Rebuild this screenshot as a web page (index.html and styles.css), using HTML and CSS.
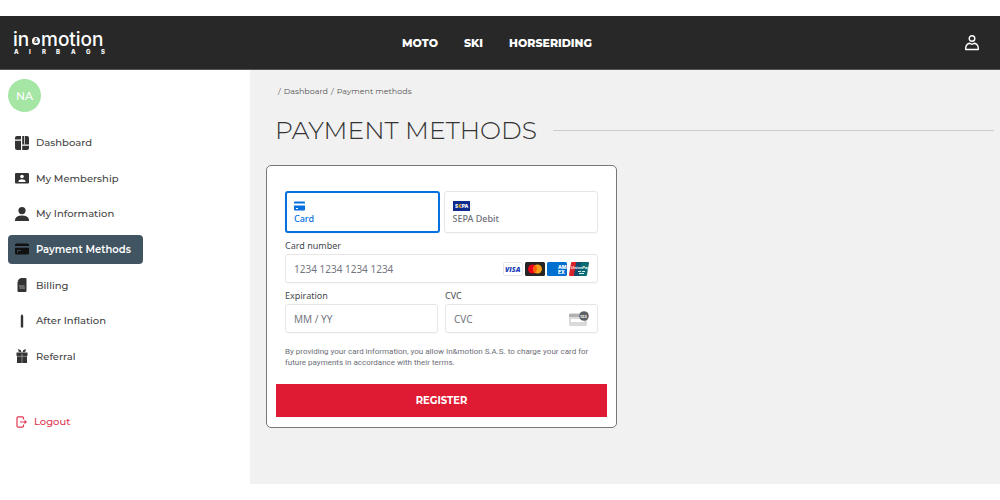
FILE: index.html
```
<!DOCTYPE html>
<html lang="en">
<head>
  <meta charset="UTF-8">
  <meta name="viewport" content="width=device-width, initial-scale=1.0">
  <title>Payment methods</title>
  <link rel="stylesheet" href="styles.css">
</head>
<body>
  <header class="topbar">
    <a class="logo" href="#" aria-label="In&amp;motion airbags">
      <svg width="94" height="26" viewBox="0 0 94 26" fill="#fff">
        <text class="logo-name" x="-1" y="16">in</text>
        <circle cx="22" cy="11" r="4"/>
        <text class="logo-amp" x="20" y="13">&amp;</text>
        <text class="logo-name" x="27" y="16">motion</text>
        <text class="logo-sub" x="0 15 28 42 57 72 87" y="24">AIRBAGS</text>
      </svg>
    </a>
    <nav class="topnav">
      <a href="#">MOTO</a>
      <a href="#">SKI</a>
      <a href="#">HORSERIDING</a>
    </nav>
    <a class="account" href="#" aria-label="Account">
      <svg width="16" height="18" viewBox="0 0 16 18" fill="none" stroke="#fff" stroke-width="1.4">
        <circle cx="8" cy="4.5" r="2.800"/>
        <path d="M1.700 15.500V14C2 11 4.400 9.500 5.800 9.300C7 10.300 9 10.300 10.200 9.300C11.600 9.500 14 11 14.300 14V15.500Z" stroke-linejoin="round"/>
      </svg>
    </a>
  </header>

  <div class="layout">
    <aside class="sidebar">
      <div class="avatar">NA</div>
      <nav class="menu">
        <a class="menu-item" href="#">
          <svg class="icon" viewBox="0 0 14 14"><path d="M2 0H6V3.500H0V2Q0 0 2 0ZM0 4.700H6V14H2Q0 14 0 12ZM7.200 0H12Q14 0 14 2V8.500H7.200ZM7.200 9.700H14V12Q14 14 12 14H7.200Z"/><path d="M9.500 0V8.500" stroke="#fff" stroke-width=".7"/></svg>
          Dashboard
        </a>
        <a class="menu-item" href="#">
          <svg class="icon" viewBox="0 0 14 14"><rect y="2" width="14" height="10.5" rx="1"/><circle cx="7" cy="5.500" r="1.800" fill="#fff"/><path d="M3.500 11V10Q4 8.200 7 8.200T10.500 10V11Z" fill="#fff"/></svg>
          My Membership
        </a>
        <a class="menu-item" href="#">
          <svg class="icon" viewBox="0 0 14 14"><circle cx="7" cy="3.600" r="3.600"/><path d="M0 14V12.500Q1 8.500 7 8.500T14 12.500V14Z"/></svg>
          My Information
        </a>
        <a class="menu-item active" href="#">
          <svg class="icon" viewBox="0 0 14 14"><path d="M1.500 1.500H12.500Q14 1.500 14 3V4H0V3Q0 1.500 1.500 1.500ZM0 5.800H14V11Q14 12.500 12.500 12.500H1.500Q0 12.500 0 11Z"/><path d="M2.500 10.500V8.500H6" fill="none" stroke="#415462" stroke-width=".8"/></svg>
          Payment Methods
        </a>
        <a class="menu-item" href="#">
          <svg class="icon" viewBox="0 0 14 14"><path d="M6 0H10.500Q11.500 0 11.500 1V13Q11.500 14 10.500 14H3.500Q2.500 14 2.500 13V4ZM2.500 2.800L5.200 0V2.800Z"/><path d="M4 8H9.500M4.500 10H10" stroke="#bbb" stroke-width=".8"/></svg>
          Billing
        </a>
        <a class="menu-item" href="#">
          <svg class="icon" viewBox="0 0 14 14"><path d="M7 0L8.200 2V13.500H5.800V2Z"/></svg>
          After Inflation
        </a>
        <a class="menu-item" href="#">
          <svg class="icon" viewBox="0 0 14 14"><path d="M1.500 3.500H12.500V7H1.500ZM2 7H12V14H2Z"/><path d="M7 4.500V14M2 7.300H12" stroke="#aaa" stroke-width=".7"/><path d="M3.200 0L5.800 1.200L6.500 3.500L3.500 2.600ZM10.800 0L8.200 1.200L7.500 3.500L10.500 2.600Z"/></svg>
          Referral
        </a>
      </nav>
      <a class="logout" href="#">
        <svg width="12" height="12" viewBox="0 0 12 12" fill="none" stroke="#e0364f" stroke-width="1.200">
          <path d="M7.500 3.500V2Q7.500 .8 6.300 .8H2.200Q1 .8 1 2V10Q1 11.200 2.200 11.200H6.300Q7.500 11.200 7.500 10V8.500M4 6H10"/>
          <path d="M8.500 3.800L11 6L8.500 8.200Z" fill="#e0364f" stroke="none"/>
        </svg>
        Logout
      </a>
    </aside>

    <main class="content">
      <nav class="breadcrumb">
        <span>/</span><a href="#">Dashboard</a><span>/</span><a href="#">Payment methods</a>
      </nav>
      <h1 class="title">PAYMENT METHODS</h1>

      <form class="card">
        <div class="fields">
          <div class="tabs">
            <button class="tab selected" type="button">
              <svg width="12" height="10" viewBox="0 0 12 10" fill="#0570de"><path d="M1 .500H10Q11 .500 11 1.500V2.500H0V1.500Q0 .500 1 .500ZM0 4.500H11V8.500Q11 9.500 10 9.500H1Q0 9.500 0 8.500Z"/><path d="M2 7.500H4" stroke="#fff"/></svg>
              Card
            </button>
            <button class="tab" type="button">
              <svg width="17" height="10" viewBox="0 0 17 10"><rect width="17" height="10" fill="#10298e"/><text class="sepa" x="2" y="7">S<tspan fill="#ffbe00">€</tspan>PA</text></svg>
              SEPA Debit
            </button>
          </div>

          <div class="field">
            <label for="number">Card number</label>
            <div class="input-box">
              <input id="number" type="text" placeholder="1234 1234 1234 1234">
              <span class="brands">
                <svg width="20" height="14" viewBox="0 0 20 14"><rect x=".5" y=".5" width="19" height="13" rx="1.500" fill="#fff" stroke="#e6e6e6"/><text class="visa" x="2" y="10">VISA</text></svg>
                <svg width="20" height="14" viewBox="0 0 20 14"><rect width="20" height="14" rx="1.500" fill="#252525"/><circle cx="7.500" cy="7" r="4.500" fill="#eb001b"/><circle cx="12.500" cy="7" r="4.500" fill="#f79e1b"/><path d="M10 3.300A4.500 4.500 0 0 1 10 10.700A4.500 4.500 0 0 1 10 3.300Z" fill="#ff5f00"/></svg>
                <svg width="20" height="14" viewBox="0 0 20 14"><rect width="20" height="14" rx="1.500" fill="#016fd0"/><text class="amex" x="11" y="7">AM</text><text class="amex" x="11" y="12">EX</text></svg>
                <svg width="20" height="14" viewBox="0 0 20 14"><path d="M3 0H9L6 14H1Q0 14 0 13L2 1Q2 0 3 0Z" fill="#d8232a"/><path d="M8 0H14L11 14H6Q5 14 5 13L7 1Q7 0 8 0Z" fill="#0f4c6e"/><path d="M13 0H19Q20 0 20 1L18 13Q18 14 17 14H11Q10 14 10 13L12 1Q12 0 13 0Z" fill="#0b6b70"/><text class="union" x="2" y="7">UnionPay</text><path d="M9 9.500H12M13 9.500H16M10 11.500H15" stroke="#d9e8e8" stroke-width="1.200"/></svg>
              </span>
            </div>
          </div>

          <div class="row">
            <div class="field">
              <label for="expiry">Expiration</label>
              <div class="input-box">
                <input id="expiry" type="text" placeholder="MM / YY">
              </div>
            </div>
            <div class="field">
              <label for="cvc">CVC</label>
              <div class="input-box">
                <input id="cvc" type="text" placeholder="CVC">
                <svg width="20" height="16" viewBox="0 0 20 16"><rect y="2" width="18" height="13" rx="1.500" fill="#dadada"/><path d="M0 4.500H14" stroke="#aaa" stroke-width="2.500"/><rect x="2" y="8" width="13" height="3" fill="#fff"/><circle cx="15" cy="5" r="4.800" fill="#5c6064"/><text class="digits" x="11" y="7">123</text></svg>
              </div>
            </div>
          </div>

          <p class="terms">By providing your card information, you allow In&amp;motion S.A.S. to charge your card for future payments in accordance with their terms.</p>
        </div>
        <button class="register" type="submit">REGISTER</button>
      </form>
    </main>
  </div>
</body>
</html>
```

FILE: styles.css
```
* {
  box-sizing: border-box;
}

body {
  margin: 0;
  padding: 16px 0;
  min-height: 100vh;
  display: flex;
  flex-direction: column;
  background: #fff;
  color: #444;
  font-family: Montserrat, Inter, sans-serif;
  font-size: 10px;
  font-weight: 500;
}

a {
  color: inherit;
  text-decoration: none;
}

svg {
  display: block;
  flex: none;
  overflow: visible;
}

button,
input {
  font: inherit;
}

/* Top bar */
.topbar {
  display: grid;
  grid-template-columns: 1fr auto 1fr;
  align-items: center;
  height: 54px;
  padding: 0 20px 0 14px;
  background: #282828;
  border-bottom: 1px solid #555;
  color: #fff;
}

.logo-name {
  font: 500 19px Inter, sans-serif;
}

.logo-amp {
  font: 700 6px Inter, sans-serif;
  fill: #282828;
}

.logo-sub {
  font: 800 6px Inter, sans-serif;
}

.topnav {
  display: flex;
  gap: 26px;
  font-size: 11px;
  font-weight: 800;
}

.account {
  justify-self: end;
}

/* Sidebar */
.layout {
  flex: 1;
  display: flex;
}

.sidebar {
  width: 25%;
  padding: 9px 8px;
}

.avatar {
  display: flex;
  align-items: center;
  justify-content: center;
  width: 33px;
  height: 33px;
  border-radius: 50%;
  background: #a5e6a5;
  color: #fff;
  font-size: 11px;
}

.menu {
  display: flex;
  flex-direction: column;
  align-items: flex-start;
  justify-content: space-between;
  min-height: 243px;
  margin-top: 16px;
}

.menu-item {
  display: flex;
  align-items: center;
  gap: 7px;
  height: 29px;
  padding: 0 12px 0 7px;
  border-radius: 4px;
}

.menu-item.active {
  background: #415462;
  color: #fff;
  font-weight: 600;
}

.icon {
  width: 14px;
  height: 14px;
  fill: #333;
}

.active .icon {
  fill: #111;
}

.logout {
  display: flex;
  align-items: center;
  gap: 6px;
  margin: 44px 8px 0;
  color: #e0364f;
}

/* Content */
.content {
  flex: 1;
  padding: 15px 6px 16px 16px;
  background: #f1f1f1;
}

.breadcrumb {
  display: flex;
  gap: 3px;
  padding-left: 12px;
  font-size: 8px;
  font-weight: 400;
  line-height: 12px;
  color: #555;
}

.title {
  display: flex;
  align-items: center;
  gap: 16px;
  margin: 17px 0 19px;
  padding-left: 9px;
  font-size: 25px;
  font-weight: 300;
  line-height: 32px;
  color: #333;
}

.title::after {
  content: "";
  flex: 1;
  height: 1px;
  background: #ccc;
}

.card {
  width: 100%;
  max-width: 351px;
  padding: 25px 9px 10px;
  border: 1px solid #777;
  border-radius: 5px;
  background: #fff;
}

.fields {
  padding: 0 9px;
  font-family: "Segoe UI", "Noto Sans", sans-serif;
  font-size: 9px;
  font-weight: 400;
  color: #45494d;
}

.tabs {
  display: grid;
  grid-template-columns: 1fr 1fr;
  gap: 4px;
  margin-bottom: 7px;
}

.tab {
  display: flex;
  flex-direction: column;
  align-items: flex-start;
  justify-content: center;
  gap: 2px;
  height: 42px;
  padding: 2px 8px 0;
  border: 1px solid #e6e6e6;
  border-radius: 3px;
  background: #fff;
  box-shadow: 0 1px 1px rgba(0, 0, 0, 0.03);
  color: #6d6e78;
  font-weight: 500;
  line-height: 12px;
}

.tab.selected {
  border: 2px solid #0570de;
  padding: 2px 7px 0;
  color: #0570de;
}

.row {
  display: grid;
  grid-template-columns: repeat(2, minmax(0, 1fr));
  gap: 7px;
  margin-top: 7px;
}

.field label {
  display: block;
  margin-bottom: 2px;
  line-height: 12px;
}

.input-box {
  display: flex;
  align-items: center;
  height: 29px;
  padding: 0 8px;
  border: 1px solid #e6e6e6;
  border-radius: 3px;
  box-shadow: 0 1px 1px rgba(0, 0, 0, 0.03);
}

.input-box input {
  flex: 1;
  min-width: 0;
  padding: 0;
  border: 0;
  outline: 0;
  background: none;
  font-size: 10px;
}

.input-box input::placeholder {
  color: #757680;
  opacity: 1;
}

.brands {
  display: flex;
  gap: 2px;
}

.sepa {
  font: 800 5px Inter, sans-serif;
  fill: #fff;
}

.visa {
  font: italic 800 7px "Open Sans", sans-serif;
  fill: #1a3fb8;
}

.amex {
  font: 800 5px Inter, sans-serif;
  fill: #fff;
}

.union {
  font: italic 700 4px "Liberation Sans", sans-serif;
  fill: #fff;
}

.digits {
  font: 700 4px Inter, sans-serif;
  fill: #fff;
}

.terms {
  margin: 13px 0 16px;
  font-family: "Segoe UI", Roboto, sans-serif;
  font-size: 8px;
  line-height: 11px;
  color: #6d6e78;
}

.register {
  display: block;
  width: 100%;
  height: 33px;
  border: 0;
  background: #df1b33;
  color: #fff;
  font-weight: 700;
}
```
